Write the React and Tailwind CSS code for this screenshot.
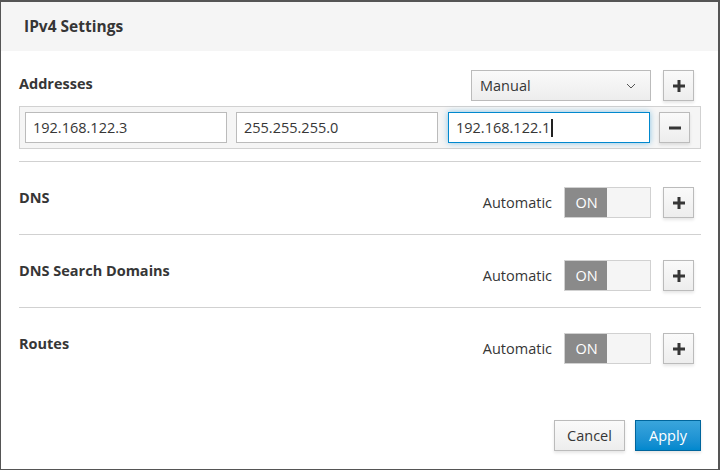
import React from "react";

function PlusIcon() {
  return (
    <svg width="12" height="12" viewBox="0 0 12 12">
      <rect x="0" y="4.5" width="12" height="3" fill="#363636" />
      <rect x="4.5" y="0" width="3" height="12" fill="#363636" />
    </svg>
  );
}

function MinusIcon() {
  return (
    <svg width="12" height="12" viewBox="0 0 12 12">
      <rect x="0" y="4.5" width="12" height="3" fill="#363636" />
    </svg>
  );
}

function IconButton({ children }) {
  return (
    <button className="w-[31px] h-[31px] flex items-center justify-center border border-[#bbbbbb] bg-gradient-to-b from-[#fafafa] to-[#ededed] shadow-[0_2px_3px_rgba(3,3,3,0.1)]">
      {children}
    </button>
  );
}

function Toggle() {
  return (
    <div className="flex w-[87px] h-[31px] border border-[#d1d1d1] bg-[#f5f5f5]">
      <div className="w-[42px] h-full bg-[#8a8a8a] text-white text-[14.5px] flex items-center justify-center pl-[1px]">
        ON
      </div>
    </div>
  );
}

function Section({ title }) {
  return (
    <div className="border-t border-[#d1d1d1] h-[73px] flex justify-between items-start pt-[25px] pr-[7px]">
      <p className="text-[14.5px] font-bold text-[#363636] leading-5 mt-[1px]">{title}</p>
      <div className="flex items-center">
        <span className="text-[14.5px] text-[#363636] mr-[12px]">Automatic</span>
        <Toggle />
        <div className="ml-[12px]">
          <IconButton>
            <PlusIcon />
          </IconButton>
        </div>
      </div>
    </div>
  );
}

function AddrInput({ value, focused }) {
  return (
    <div
      className={
        "w-[202px] h-[31px] bg-white flex items-center px-[7px] text-[14.5px] text-[#363636] " +
        (focused
          ? "border border-[#0088ce] shadow-[0_0_6px_rgba(0,136,206,0.45)]"
          : "border border-[#bbbbbb]")
      }
    >
      {value}
      {focused && <span className="w-[2px] h-[18px] bg-[#222] ml-[1px]" />}
    </div>
  );
}

export default function App() {
  return (
    <div
      className="w-[720px] h-[470px] bg-white border-[#555555] border-t-2 border-r-2 border-l border-b flex flex-col"
      style={{ fontFamily: '"Open Sans", "Liberation Sans", sans-serif' }}
    >
      <div className="h-[49px] bg-[#f5f5f5] flex items-center pl-[23px]">
        <h1 className="text-[15.5px] font-bold text-[#363636]">IPv4 Settings</h1>
      </div>

      <div className="pl-[18px] pr-[17px] pt-[19px] flex flex-col flex-1">
        <div className="flex justify-between items-center pr-[7px]">
          <p className="text-[14.5px] font-bold text-[#363636] -mt-[4px]">Addresses</p>
          <div className="flex items-center gap-[12px]">
            <div className="w-[180px] h-[31px] border border-[#bbbbbb] bg-gradient-to-b from-[#fafafa] to-[#ededed] flex items-center justify-between px-[8px] text-[14.5px] text-[#363636]">
              <span>Manual</span>
              <svg width="10" height="6" viewBox="0 0 10 6" className="mr-[6px]">
                <path d="M1 1l4 4 4-4" fill="none" stroke="#555" strokeWidth="1" />
              </svg>
            </div>
            <IconButton>
              <PlusIcon />
            </IconButton>
          </div>
        </div>

        <div className="mt-[5px] h-[43px] border border-[#d1d1d1] bg-[#f5f5f5] flex items-center pl-[5px] gap-[9px]">
          <AddrInput value="192.168.122.3" />
          <AddrInput value="255.255.255.0" />
          <div className="ml-[1px]">
            <AddrInput value="192.168.122.1" focused />
          </div>
          <IconButton>
            <MinusIcon />
          </IconButton>
        </div>

        <div className="mt-[12px]">
          <Section title="DNS" />
          <Section title="DNS Search Domains" />
          <Section title="Routes" />
        </div>

        <div className="mt-auto mb-[18px] flex justify-end gap-[10px]">
          <button className="h-[31px] w-[71px] border border-[#bbbbbb] bg-gradient-to-b from-[#fafafa] to-[#ededed] text-[14.5px] text-[#363636] shadow-[0_2px_3px_rgba(3,3,3,0.1)]">
            Cancel
          </button>
          <button className="h-[31px] w-[66px] border border-[#00659c] bg-gradient-to-b from-[#39a5dc] to-[#0088ce] text-[14.5px] text-white shadow-[0_2px_3px_rgba(3,3,3,0.1)]">
            Apply
          </button>
        </div>
      </div>
    </div>
  );
}
